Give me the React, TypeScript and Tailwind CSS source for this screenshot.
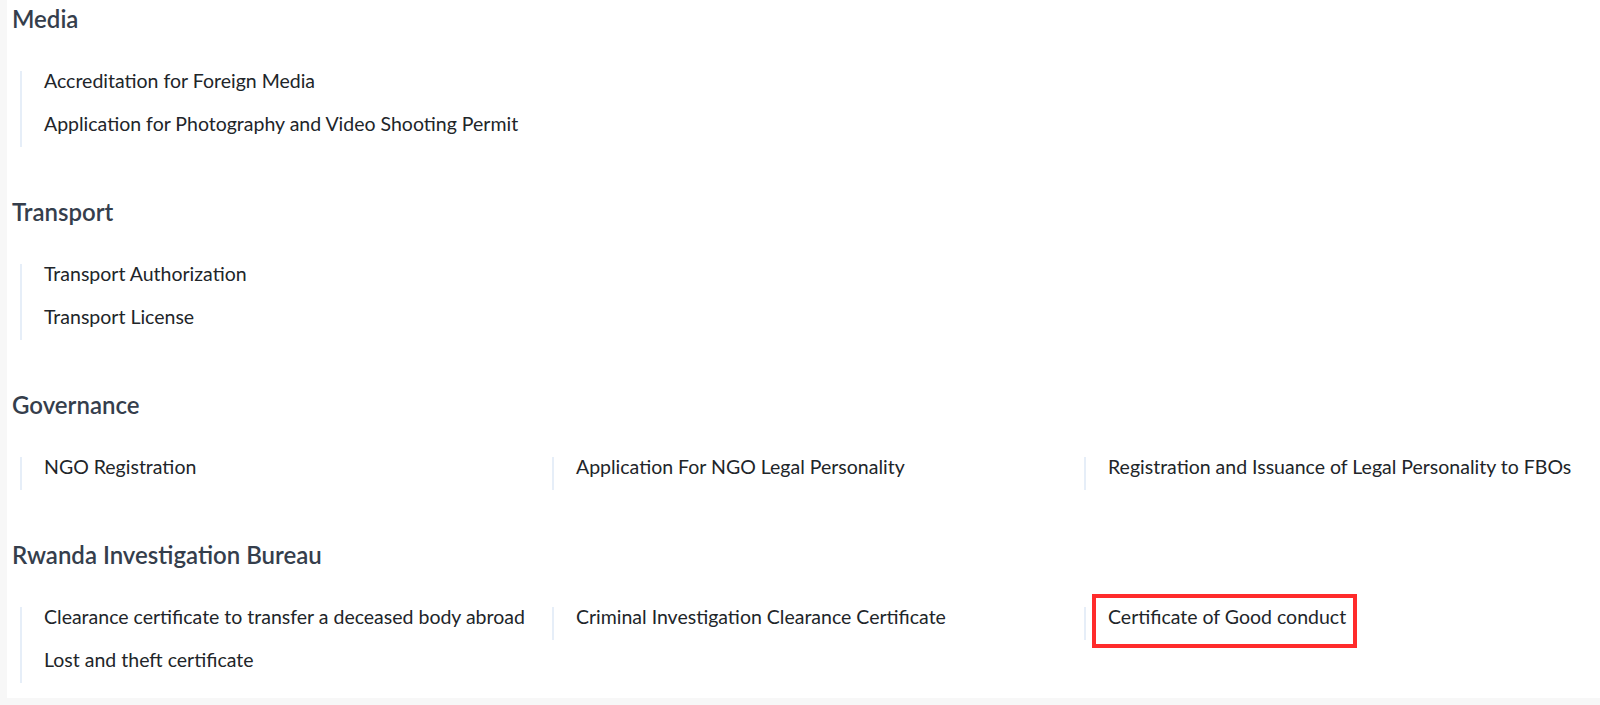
import React from "react";

type Section = { title: string; columns: string[][] };

const sections: Section[] = [
  {
    title: "Media",
    columns: [["Accreditation for Foreign Media", "Application for Photography and Video Shooting Permit"]],
  },
  {
    title: "Transport",
    columns: [["Transport Authorization", "Transport License"]],
  },
  {
    title: "Governance",
    columns: [
      ["NGO Registration"],
      ["Application For NGO Legal Personality"],
      ["Registration and Issuance of Legal Personality to FBOs"],
    ],
  },
  {
    title: "Rwanda Investigation Bureau",
    columns: [
      ["Clearance certificate to transfer a deceased body abroad", "Lost and theft certificate"],
      ["Criminal Investigation Clearance Certificate"],
      ["Certificate of Good conduct"],
    ],
  },
];

export default function App() {
  return (
    <div
      className="w-[1600px] h-[705px] bg-[#f7f7f7] pl-[7px] overflow-hidden"
      style={{ fontFamily: "Lato, 'Open Sans', sans-serif" }}
    >
      <div className="relative bg-white h-[698px] w-full overflow-hidden pl-[5px] pt-[4px]">
        <div className="flex flex-col gap-[50px]">
          {sections.map((s) => (
            <div key={s.title}>
              <h3 className="text-[24px] leading-[30px] font-semibold text-[#353e4c]">{s.title}</h3>
              <div className="mt-[37px] ml-[8px] grid grid-cols-[532px_532px_532px] w-[1596px]">
                {s.columns.map((col, i) => (
                  <div key={i} className="border-l-2 border-[#e6eef8] pl-[22px] pb-[13px] flex flex-col gap-[23px] self-start">
                    {col.map((item) => (
                      <div key={item} className="text-[19.5px] leading-[20px] text-[#212529] whitespace-nowrap">
                        {item}
                      </div>
                    ))}
                  </div>
                ))}
              </div>
            </div>
          ))}
        </div>
        <div className="absolute left-[1085px] top-[594px] w-[265px] h-[54px] border-[4.5px] border-[#ff2b2b]" />
      </div>
    </div>
  );
}
